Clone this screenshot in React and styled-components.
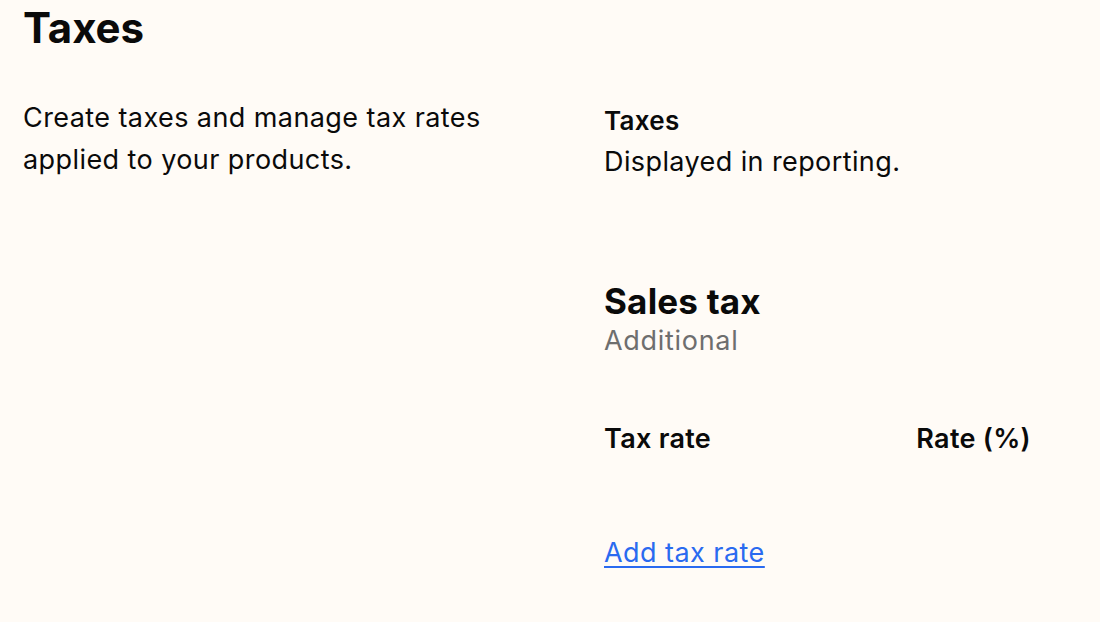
import styled, { createGlobalStyle } from "styled-components";

const GlobalStyle = createGlobalStyle`
  body {
    margin: 0;
    background: #fffbf6;
    font-family: Inter, "Noto Sans", sans-serif;
    color: #0a0a0a;
  }
`;

const Page = styled.main`
  padding: 0 23px;
`;

const PageTitle = styled.h1`
  font-size: 42px;
  font-weight: 700;
  line-height: 56px;
  margin: 0 0 41px;
  letter-spacing: -0.1px;
`;

const Layout = styled.div`
  display: grid;
  grid-template-columns: 581px 427px;
`;

const Intro = styled.p`
  font-size: 27px;
  letter-spacing: 0.42px;
  line-height: 42px;
  margin: 0;
  max-width: 500px;
`;

const Settings = styled.section`
  display: flex;
  flex-direction: column;
`;

const Label = styled.h3`
  font-size: 26px;
  font-weight: 600;
  letter-spacing: 0.3px;
  line-height: 42px;
  margin: 3px 0 0;
`;

const Hint = styled.p`
  font-size: 27px;
  letter-spacing: ${(p) => (p.$muted ? "0.7px" : "0.4px")};
  line-height: 40px;
  margin: 0;
  color: ${(p) => (p.$muted ? "#6e6e6e" : "#0a0a0a")};
`;

const TaxHeading = styled.h2`
  font-size: 35px;
  font-weight: 700;
  letter-spacing: 0.2px;
  line-height: 40px;
  margin: 99px 0 0;
`;

const Table = styled.div`
  display: flex;
  justify-content: space-between;
  margin-top: 58px;
  font-size: 27px;
  font-weight: 600;
  letter-spacing: 0.3px;
  line-height: 40px;
`;

const AddLink = styled.a`
  margin-top: 74px;
  font-size: 27px;
  letter-spacing: 0.45px;
  line-height: 40px;
  color: #2a6af0;
  text-decoration: underline;
  text-underline-offset: 4px;
  text-decoration-thickness: 2px;
  align-self: flex-start;
  cursor: pointer;
`;

export default function App() {
  return (
    <>
      <GlobalStyle />
      <Page>
        <PageTitle>Taxes</PageTitle>
        <Layout>
          <Intro>Create taxes and manage tax rates applied to your products.</Intro>
          <Settings>
            <Label>Taxes</Label>
            <Hint>Displayed in reporting.</Hint>
            <TaxHeading>Sales tax</TaxHeading>
            <Hint $muted>Additional</Hint>
            <Table>
              <span>Tax rate</span>
              <span>Rate (%)</span>
            </Table>
            <AddLink>Add tax rate</AddLink>
          </Settings>
        </Layout>
      </Page>
    </>
  );
}
